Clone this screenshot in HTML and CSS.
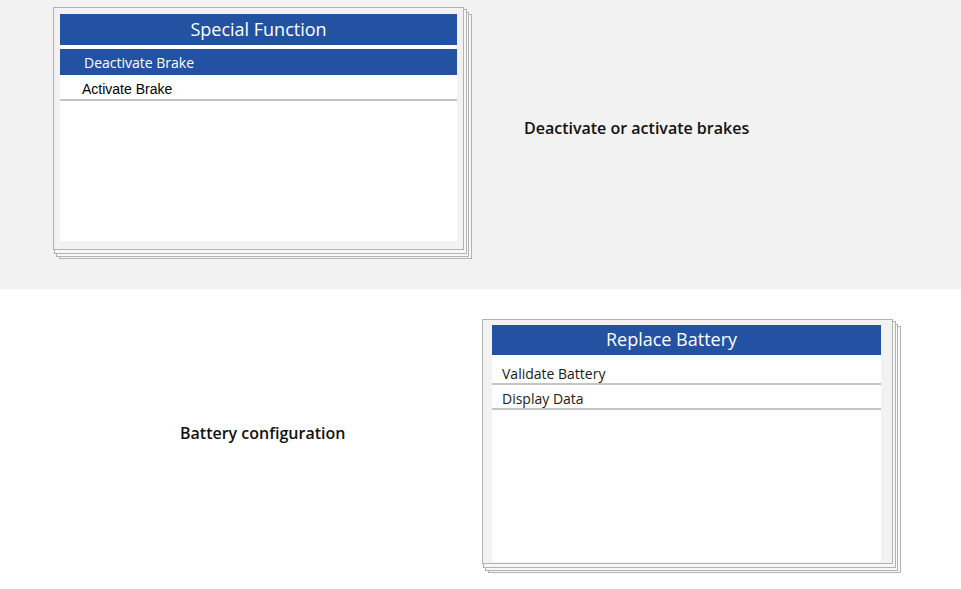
FILE: index.html
```html
<!DOCTYPE html>
<html lang="en">
<head>
  <meta charset="UTF-8">
  <title>Special Functions</title>
  <link rel="stylesheet" href="styles.css">
</head>
<body>

  <div class="band band-top">
    <div class="screen screen-brake">
      <div class="screen-body">
        <div class="screen-title">Special Function</div>
        <div class="item item-selected">Deactivate Brake</div>
        <div class="item item-plain">Activate Brake</div>
      </div>
    </div>
    <p class="caption caption-brake">Deactivate or activate brakes</p>
  </div>

  <div class="band band-bottom">
    <p class="caption caption-battery">Battery configuration</p>
    <div class="screen screen-battery">
      <div class="screen-body">
        <div class="screen-title">Replace Battery</div>
        <div class="item item-line">Validate Battery</div>
        <div class="item item-line item-short">Display Data</div>
      </div>
    </div>
  </div>

</body>
</html>
```

FILE: styles.css
```css
* {
  margin: 0;
  padding: 0;
  box-sizing: border-box;
}

body {
  background: #ffffff;
  font-family: 'Open Sans', 'Noto Sans', sans-serif;
  color: #1a1a1a;
}

.band {
  display: flex;
  align-items: flex-start;
}

.band-top {
  background: #f2f2f2;
  height: 289px;
  padding: 7px 0 0 53px;
}

.band-bottom {
  height: 300px;
  padding: 30px 0 0 180px;
}

/* stacked "pages" behind each screen are drawn with shadows */
.screen {
  width: 411px;
  border: 1px solid #b2b2b2;
  background: #f2f2f2;
  box-shadow:
    2px 3px 0 0 #f7f7f7, 2px 3px 0 1px #b2b2b2,
    4px 6px 0 0 #f7f7f7, 4px 6px 0 1px #b2b2b2,
    7px 8px 0 0 #f7f7f7, 7px 8px 0 1px #b2b2b2;
}

.screen-brake {
  height: 243px;
  padding: 6px 6px 8px 6px;
}

.screen-battery {
  height: 245px;
  padding: 5px 11px 1px 9px;
  margin-left: auto;
  margin-right: 68px;
}

.screen-body {
  background: #ffffff;
  height: 100%;
}

.screen-title {
  background: #2352a3;
  color: #ffffff;
  text-align: center;
  font-size: 18px;
  height: 31px;
  line-height: 30px;
}

.screen-battery .screen-title {
  height: 30px;
  line-height: 29px;
  padding-right: 30px;
}

.item {
  font-size: 14px;
  height: 26px;
  line-height: 20px;
}

.item-selected {
  margin-top: 4px;
  background: #2352a3;
  color: #ffffff;
  padding: 4px 0 0 24px;
}

.item-plain {
  font-family: 'Liberation Sans', Arial, sans-serif;
  color: #000000;
  padding: 4px 0 0 22px;
  border-bottom: 2px solid #c4c4c4;
}

.item-line {
  height: 30px;
  padding: 9px 0 0 10px;
  border-bottom: 2px solid #c4c4c4;
}

.item-short {
  height: 25px;
  padding-top: 4px;
}

.caption {
  font-size: 16px;
  font-weight: 600;
  color: #111111;
}

.caption-brake {
  margin: 110px 0 0 60px;
}

.caption-battery {
  margin-top: 103px;
}
```
